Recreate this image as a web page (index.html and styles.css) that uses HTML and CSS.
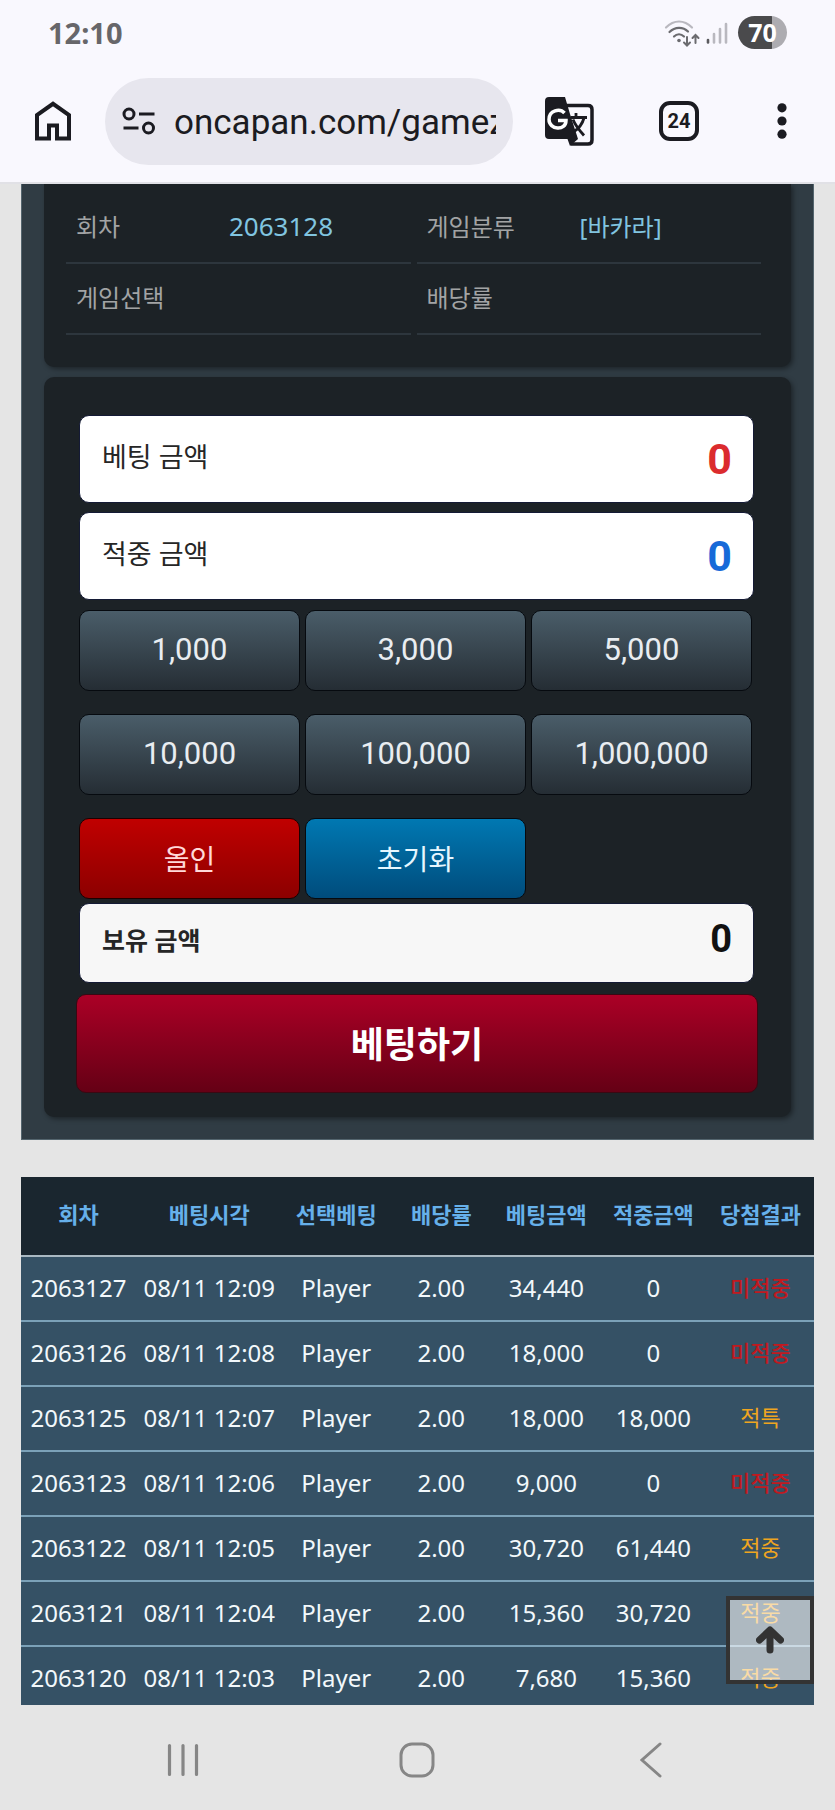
FILE: index.html
```html
<!DOCTYPE html>
<html lang="ko">
<head>
    <meta charset="UTF-8">
    <meta name="viewport" content="width=device-width, initial-scale=1.0">
    <title>바카라</title>
    <link rel="stylesheet" href="styles.css">
</head>
<body>
    <header>
        <div class="status-bar">
            <span class="clock">12:10</span>
            <div class="status-icons">
                <svg class="wifi" width="36" height="28" viewBox="0 0 36 28" fill="none" stroke="#6b6b6f" stroke-width="2.2" stroke-linecap="round">
                    <path d="M2 8.500C10 0.500 20 0.500 28 8.500" stroke="#b9b8bf"/>
                    <path d="M5.500 13C11 7.500 19 7.500 24 12.500"/>
                    <path d="M10 17.500C13 14.500 17 14.500 20 17.500"/>
                    <circle cx="15" cy="21.500" r="1.800" fill="#6b6b6f" stroke="none"/>
                    <path d="M23 18V26M20 23.500L23 26.500L26 23.500M31.500 24V16.500M28.500 19L31.500 16L34.500 19" stroke-width="2"/>
                </svg>
                <svg class="signal" width="22" height="24" viewBox="0 0 22 24" stroke="#b9b8bf" stroke-width="2.600" stroke-linecap="round">
                    <path d="M2 19V21.500" stroke="#5a5a5e"/>
                    <path d="M8 13V21.500M14 8V21.500M20 3V21.500"/>
                </svg>
                <span class="battery">70</span>
            </div>
        </div>
        <div class="toolbar">
            <button class="tool home" aria-label="홈">
                <svg width="36" height="40" viewBox="0 0 36 40" fill="none" stroke="#1b1b21" stroke-width="4">
                    <path d="M2 37.500V14L18 2.800L34 14V37.500H22V24.500H14V37.500Z"/>
                </svg>
            </button>
            <div class="address">
                <svg width="34" height="28" viewBox="0 0 34 28" fill="none" stroke="#1b1b21" stroke-width="3">
                    <circle cx="7" cy="7" r="5"/>
                    <path d="M17 7H32.500M1.500 21H16.500"/>
                    <circle cx="26.500" cy="21" r="5"/>
                </svg>
                <input class="url" type="text" aria-label="주소" value="oncapan.com/gamezone">
            </div>
            <button class="tool translate" aria-label="번역">
                <svg width="49" height="49" viewBox="0 0 49 49" fill="none">
                    <path d="M22 8.500H43Q47 8.500 47 12.500V43Q47 47 43 47H26" stroke="#1b1b21" stroke-width="3.500"/>
                    <path d="M4 0H20L25 17L33 42L25 49L22.500 42H4Q0 42 0 38V4Q0 0 4 0Z" fill="#1b1b21"/>
                    <path d="M19.500 16C15 11 4 13 4 22.500C4 33 21 34.500 21 23.500H13" stroke="#fff" stroke-width="3.500"/>
                    <path d="M25.500 20.500H42M31 16V20.500M39 21C37 28 33 32 29 34.500M28 22.500C30.500 29 35 34 39 38.500" stroke="#1b1b21" stroke-width="2.800"/>
                </svg>
            </button>
            <button class="tool tabs">24</button>
            <button class="tool menu" aria-label="메뉴">
                <svg width="10" height="36" viewBox="0 0 10 36" fill="#1b1b21">
                    <circle cx="5" cy="4.800" r="4.600"/>
                    <circle cx="5" cy="18" r="4.600"/>
                    <circle cx="5" cy="31.200" r="4.600"/>
                </svg>
            </button>
        </div>
    </header>

    <main>
        <div class="board">
            <div class="panel info">
                <dl class="info-item"><dt>회차</dt><dd class="round">2063128</dd></dl>
                <dl class="info-item"><dt>게임분류</dt><dd>[바카라]</dd></dl>
                <dl class="info-item"><dt>게임선택</dt><dd></dd></dl>
                <dl class="info-item"><dt>배당률</dt><dd></dd></dl>
            </div>
            <form class="panel betting">
                <div class="field">
                    <label for="bet">베팅 금액</label>
                    <input class="bet" type="text" id="bet" value="0">
                </div>
                <div class="field">
                    <label for="win">적중 금액</label>
                    <input class="win" type="text" id="win" value="0" readonly>
                </div>
                <div class="amounts">
                    <button type="button">1,000</button>
                    <button type="button">3,000</button>
                    <button type="button">5,000</button>
                    <button type="button">10,000</button>
                    <button type="button">100,000</button>
                    <button type="button">1,000,000</button>
                    <button type="button" class="all-in">올인</button>
                    <button type="button" class="reset">초기화</button>
                </div>
                <div class="field balance">
                    <label for="balance">보유 금액</label>
                    <input type="text" id="balance" value="0" readonly>
                </div>
                <button type="submit" class="submit">베팅하기</button>
            </form>
        </div>

        <table class="history">
            <thead>
                <tr><th>회차</th><th>베팅시각</th><th>선택베팅</th><th>배당률</th><th>베팅금액</th><th>적중금액</th><th>당첨결과</th></tr>
            </thead>
            <tbody>
                <tr><td>2063127</td><td>08/11 12:09</td><td>Player</td><td>2.00</td><td>34,440</td><td>0</td><td class="result miss">미적중</td></tr>
                <tr><td>2063126</td><td>08/11 12:08</td><td>Player</td><td>2.00</td><td>18,000</td><td>0</td><td class="result miss">미적중</td></tr>
                <tr><td>2063125</td><td>08/11 12:07</td><td>Player</td><td>2.00</td><td>18,000</td><td>18,000</td><td class="result">적특</td></tr>
                <tr><td>2063123</td><td>08/11 12:06</td><td>Player</td><td>2.00</td><td>9,000</td><td>0</td><td class="result miss">미적중</td></tr>
                <tr><td>2063122</td><td>08/11 12:05</td><td>Player</td><td>2.00</td><td>30,720</td><td>61,440</td><td class="result">적중</td></tr>
                <tr><td>2063121</td><td>08/11 12:04</td><td>Player</td><td>2.00</td><td>15,360</td><td>30,720</td><td class="result">적중</td></tr>
                <tr><td>2063120</td><td>08/11 12:03</td><td>Player</td><td>2.00</td><td>7,680</td><td>15,360</td><td class="result">적중</td></tr>
            </tbody>
        </table>

        <button class="to-top" aria-label="맨 위로">
            <svg width="28" height="28" viewBox="0 0 28 28" fill="none" stroke="#333" stroke-width="7" stroke-linecap="round" stroke-linejoin="round">
                <path d="M14 24V5M3.500 14L14 4L24.500 14"/>
            </svg>
        </button>
    </main>

    <nav>
        <button aria-label="최근 앱">
            <svg width="34" height="34" viewBox="0 0 34 34" stroke="#868686" stroke-width="3.200" stroke-linecap="round">
                <path d="M3.500 2.500V31.500M17 2.500V31.500M30.500 2.500V31.500"/>
            </svg>
        </button>
        <button aria-label="홈 화면">
            <svg width="36" height="36" viewBox="0 0 36 36" fill="none" stroke="#868686" stroke-width="3">
                <rect x="2" y="2" width="32" height="32" rx="11"/>
            </svg>
        </button>
        <button aria-label="뒤로">
            <svg width="22" height="36" viewBox="0 0 22 36" fill="none" stroke="#868686" stroke-width="3" stroke-linecap="round">
                <path d="M20 2L2 18L20 34"/>
            </svg>
        </button>
    </nav>
</body>
</html>
```
FILE: styles.css
```css
* {
    box-sizing: border-box;
}
body {
    margin: 0;
    height: 100vh;
    display: flex;
    flex-direction: column;
    font-family: "Noto Sans", "Noto Sans CJK KR", sans-serif;
    background: #e5e5e5;
}
button {
    font-family: inherit;
    border: none;
    padding: 0;
    background: none;
    cursor: pointer;
}
svg {
    display: block;
    flex: none;
}

/* Status bar and browser toolbar */
header {
    flex: none;
    background: #f9f8fe;
    border-bottom: 2px solid #e1e1e6;
}
.status-bar {
    display: flex;
    justify-content: space-between;
    align-items: center;
    height: 65px;
    padding: 0 48px;
}
.clock {
    font-size: 29px;
    font-weight: 700;
    color: #67666a;
}
.status-icons {
    display: flex;
    align-items: center;
    gap: 6px;
}
.battery {
    width: 49px;
    height: 33px;
    margin-left: 4px;
    border-radius: 17px;
    background: linear-gradient(to right, #4a4a4c 70%, #adacb1 70%);
    color: #fff;
    font-size: 25px;
    font-weight: 700;
    line-height: 33px;
    text-align: center;
}
.toolbar {
    display: flex;
    align-items: center;
    height: 117px;
    padding: 0 48px 5px 35px;
}
.tool {
    flex: none;
}
.address {
    flex: 1;
    min-width: 0;
    display: flex;
    align-items: center;
    gap: 18px;
    height: 87px;
    margin: 0 32px 0 34px;
    padding: 0 17px;
    border-radius: 44px;
    background: #e7e6ee;
}
.url {
    flex: 1;
    min-width: 0;
    padding: 3px 0 0;
    border: none;
    outline: none;
    font-family: Roboto, sans-serif;
    font-size: 35px;
    color: #1b1b21;
    background: none;
}
.tabs {
    width: 40px;
    height: 40px;
    margin: 0 78px 0 65px;
    border: 4px solid #1b1b21;
    border-radius: 11px;
    color: #1b1b21;
    font-family: Roboto, sans-serif;
    font-size: 20px;
    font-weight: 700;
    line-height: 32px;
}

/* Page */
main {
    position: relative;
    flex: 1;
    min-height: 0;
    overflow: hidden;
    padding: 0 21px;
}
.board {
    padding: 0 22px 22px;
    border: 1px solid #54656e;
    border-top: none;
    background: #303c44;
}
.panel {
    border-radius: 10px;
    background: #1c2226;
    box-shadow: 2px 2px 5px rgba(0, 0, 0, 0.4);
}
.info {
    display: grid;
    grid-template-columns: 1fr 1fr;
    column-gap: 6px;
    padding: 9px 30px 32px 22px;
    border-radius: 0 0 10px 10px;
}
.info-item {
    display: flex;
    align-items: center;
    height: 71px;
    margin: 0;
    padding: 0 10px 4px;
    border-bottom: 2px solid #2d363d;
    font-size: 24px;
}
.info-item dt {
    width: 153px;
    color: #a2a4a5;
}
.info-item dd {
    margin: 0;
    color: #81c5e0;
}
.info-item .round {
    font-size: 26px;
}

/* Betting form */
.betting {
    margin-top: 10px;
    padding: 38px 33px 24px 32px;
}
.field {
    display: flex;
    align-items: center;
    height: 88px;
    margin: 0 4px 9px 3px;
    padding: 0 21px 8px 22px;
    border: 1px solid #141a35;
    border-radius: 10px;
    background: #fff;
}
.field label {
    flex: none;
    font-size: 27px;
    color: #262626;
}
.field input {
    flex: 1;
    min-width: 0;
    padding: 8px 0 0;
    border: none;
    outline: none;
    background: none;
    text-align: right;
    font-family: Roboto, sans-serif;
    font-size: 43px;
    font-weight: 700;
}
.field .bet {
    color: #db2b2e;
}
.field .win {
    color: #176ad8;
}
.amounts {
    display: grid;
    grid-template-columns: repeat(3, 1fr);
    gap: 23px 5px;
    margin: 10px 6px 4px 3px;
}
.amounts button {
    height: 81px;
    padding-bottom: 2px;
    border: 1px solid #060a0f;
    border-radius: 10px;
    background: linear-gradient(#4a5d69, #252d34);
    color: #e9edf1;
    font-family: Roboto, "Noto Sans CJK KR", sans-serif;
    font-size: 31px;
}
.amounts .all-in,
.amounts .reset {
    font-size: 28px;
}
.amounts .all-in {
    background: linear-gradient(#c00000, #8c0000);
    border-color: #1c0000;
    color: #ffd9d9;
}
.amounts .reset {
    background: linear-gradient(#0078b2, #004c7c);
    color: #e6f7ff;
}
.balance {
    height: 80px;
    margin-bottom: 11px;
    background: #f7f7f7;
}
.balance label {
    font-size: 25px;
    font-weight: 700;
}
.balance input {
    padding: 0;
    font-size: 38px;
    color: #111;
}
.submit {
    display: block;
    width: 100%;
    height: 99px;
    padding-bottom: 2px;
    border: 1px solid #3a0812;
    border-radius: 10px;
    background: linear-gradient(#ab0026, #650015);
    color: #fff;
    font-size: 36px;
    font-weight: 700;
}

/* Betting history */
.history {
    width: 100%;
    margin-top: 37px;
    border-collapse: collapse;
    table-layout: fixed;
    background: #355165;
    color: #f2f8fb;
    font-size: 24px;
    text-align: center;
    white-space: nowrap;
}
.history th,
.history td {
    height: 65px;
    padding: 0 0 2px;
    border-bottom: 2px solid #7ba1b8;
}
.history th {
    height: 79px;
    padding-bottom: 6px;
    background: #1a262f;
    border-bottom-color: #a9b8c2;
    color: #66b0ea;
    font-size: 22px;
}
.history th:nth-child(1) { width: 14.5%; }
.history th:nth-child(2) { width: 18.5%; }
.history th:nth-child(3) { width: 13.5%; }
.history th:nth-child(4) { width: 13%; }
.history th:nth-child(5) { width: 13.5%; }
.history th:nth-child(6) { width: 13.5%; }
.history th:nth-child(7) { width: 13.5%; }
.history .result {
    padding-bottom: 5px;
    font-size: 22px;
    color: #efa51f;
}
.history .miss {
    font-weight: 500;
    color: #c0191f;
}
.to-top {
    position: absolute;
    right: 21px;
    bottom: 21px;
    display: flex;
    align-items: center;
    justify-content: center;
    width: 88px;
    height: 88px;
    border: 4px solid #333;
    background: rgba(255, 255, 255, 0.6);
}

/* System navigation */
nav {
    flex: none;
    display: flex;
    height: 105px;
    padding: 5px 67px 0 66px;
}
nav button {
    flex: 1;
    display: flex;
    align-items: center;
    justify-content: center;
}
```
